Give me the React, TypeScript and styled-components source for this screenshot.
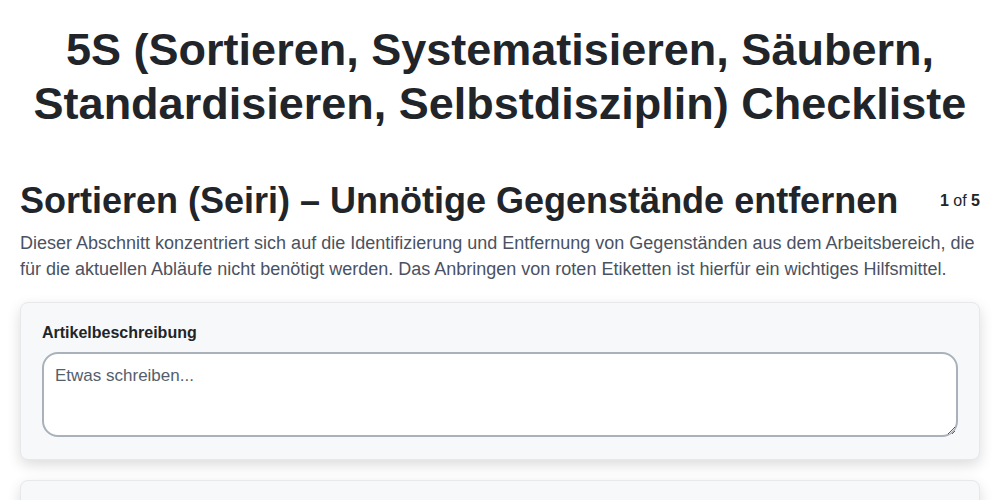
import * as React from "react";
import styled, { createGlobalStyle } from "styled-components";

const GlobalStyle = createGlobalStyle`
  body {
    margin: 0;
    background: #ffffff;
    font-family: "Liberation Sans", Arial, sans-serif;
    color: #212529;
  }
`;

const Page = styled.div`
  padding: 0 20px 40px;
`;

const Title = styled.h1`
  margin: 23px 0 0;
  text-align: center;
  font-size: 45px;
  line-height: 54px;
  font-weight: bold;
  color: #212529;
`;

const Section = styled.section`
  margin-top: 49px;
`;

const SectionHeader = styled.div`
  display: flex;
  align-items: center;
  justify-content: space-between;
`;

const SectionTitle = styled.h2`
  margin: 0;
  font-size: 36px;
  line-height: 42px;
  font-weight: bold;
  color: #212529;
`;

const Pager = styled.div`
  font-size: 16px;
  color: #212529;
  b {
    font-weight: bold;
  }
`;

const Description = styled.p`
  margin: 8px 0 0;
  font-size: 18px;
  line-height: 26px;
  color: #4a5262;
`;

const Card = styled.div`
  margin-top: 20px;
  padding: 21px 21px 22px;
  background: #f7f8fa;
  border: 1px solid #e6e8ec;
  border-radius: 8px;
  box-shadow: 0 5px 14px rgba(0, 0, 0, 0.14);
`;

const Label = styled.label`
  display: block;
  font-size: 16px;
  font-weight: bold;
  color: #212529;
  margin-bottom: 10px;
`;

const TextArea = styled.textarea`
  display: block;
  box-sizing: border-box;
  width: 100%;
  height: 85px;
  padding: 12px 11px;
  border: 2px solid #a9b1ba;
  border-radius: 16px;
  background: #ffffff;
  font-family: "Liberation Sans", Arial, sans-serif;
  font-size: 17px;
  color: #212529;
  outline: none;
  &::placeholder {
    color: #555e6b;
  }
`;

export default function App() {
  return (
    <Page>
      <GlobalStyle />
      <Title>
        5S (Sortieren, Systematisieren, Säubern,
        <br />
        Standardisieren, Selbstdisziplin) Checkliste
      </Title>
      <Section>
        <SectionHeader>
          <SectionTitle>Sortieren (Seiri) – Unnötige Gegenstände entfernen</SectionTitle>
          <Pager>
            <b>1</b> of <b>5</b>
          </Pager>
        </SectionHeader>
        <Description>
          Dieser Abschnitt konzentriert sich auf die Identifizierung und Entfernung von Gegenständen aus dem
          Arbeitsbereich, die für die aktuellen Abläufe nicht benötigt werden. Das Anbringen von roten Etiketten ist
          hierfür ein wichtiges Hilfsmittel.
        </Description>
        <Card>
          <Label>Artikelbeschreibung</Label>
          <TextArea placeholder="Etwas schreiben..." />
        </Card>
        <Card>
          <Label>Menge</Label>
          <TextArea placeholder="Etwas schreiben..." />
        </Card>
      </Section>
    </Page>
  );
}
